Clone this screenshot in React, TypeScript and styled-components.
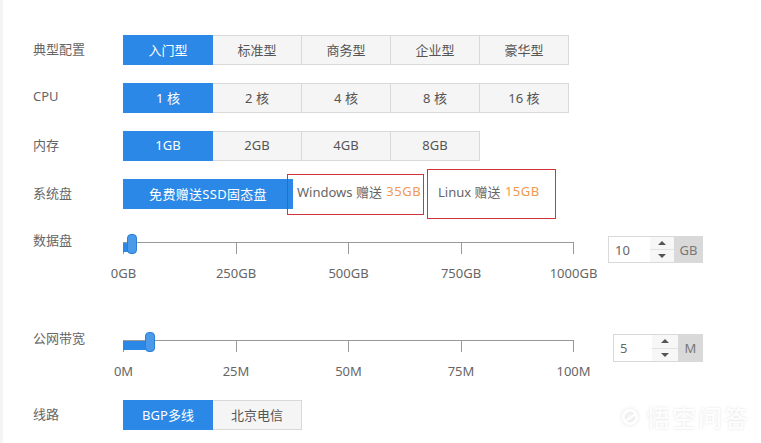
import React from "react";
import styled, { createGlobalStyle } from "styled-components";

const FONT = `"Noto Sans", "Noto Sans CJK SC", sans-serif`;

const GlobalStyle = createGlobalStyle`
  html, body {
    margin: 0;
    padding: 0;
    background: #fff;
    overflow: hidden;
  }
`;

interface SliderConfig {
  marks: string[];
  fill: number;
  thumb: number;
  value: string;
  unit: string;
  inputWidth: number;
  spinWidth: number;
  unitWidth: number;
  height: number;
}

const diskSlider: SliderConfig = {
  marks: ["0GB", "250GB", "500GB", "750GB", "1000GB"],
  fill: 6,
  thumb: 4,
  value: "10",
  unit: "GB",
  inputWidth: 42,
  spinWidth: 24,
  unitWidth: 29,
  height: 27,
};

const bandwidthSlider: SliderConfig = {
  marks: ["0M", "25M", "50M", "75M", "100M"],
  fill: 24,
  thumb: 22,
  value: "5",
  unit: "M",
  inputWidth: 39,
  spinWidth: 26,
  unitWidth: 25,
  height: 28,
};

function Segments({ items, wide }: { items: string[]; wide?: boolean }) {
  return (
    <Group>
      {items.map((item, index) => (
        <Segment key={item} active={index === 0} wide={wide}>
          {item}
        </Segment>
      ))}
    </Group>
  );
}

function SliderField({ config }: { config: SliderConfig }) {
  return (
    <SliderRow>
      <Slider>
        <Track>
          <Fill style={{ width: config.fill }} />
          <Thumb style={{ left: config.thumb }} />
          {config.marks.map((mark) => (
            <Tick key={mark} />
          ))}
        </Track>
        <Marks>
          {config.marks.map((mark) => (
            <Mark key={mark}>{mark}</Mark>
          ))}
        </Marks>
      </Slider>
      <Spinner>
        <SpinnerValue style={{ width: config.inputWidth, height: config.height }}>
          {config.value}
        </SpinnerValue>
        <SpinnerArrows style={{ width: config.spinWidth }}>
          <SpinUp>
            <ArrowUp />
          </SpinUp>
          <SpinDown>
            <ArrowDown />
          </SpinDown>
        </SpinnerArrows>
        <SpinnerUnit style={{ width: config.unitWidth }}>{config.unit}</SpinnerUnit>
      </Spinner>
    </SliderRow>
  );
}

export default function App() {
  return (
    <Page>
      <GlobalStyle />
      <Form>
        <Row>
          <Label>典型配置</Label>
          <Segments items={["入门型", "标准型", "商务型", "企业型", "豪华型"]} />
        </Row>
        <Row>
          <Label>CPU</Label>
          <Segments items={["1 核", "2 核", "4 核", "8 核", "16 核"]} />
        </Row>
        <Row>
          <Label>内存</Label>
          <Segments items={["1GB", "2GB", "4GB", "8GB"]} />
        </Row>
        <Row>
          <Label>系统盘</Label>
          <Segments wide items={["免费赠送SSD固态盘"]} />
          <DiskOption>
            Windows 赠送 <Orange>35GB</Orange>
          </DiskOption>
          <DiskOption large>
            Linux 赠送 <Orange>15GB</Orange>
          </DiskOption>
        </Row>
        <SliderSection>
          <SliderLabel>数据盘</SliderLabel>
          <SliderField config={diskSlider} />
        </SliderSection>
        <SliderSection second>
          <SliderLabel>公网带宽</SliderLabel>
          <SliderField config={bandwidthSlider} />
        </SliderSection>
        <Row last>
          <Label>线路</Label>
          <Segments items={["BGP多线", "北京电信"]} />
        </Row>
      </Form>
      <Watermark>
        <WatermarkIcon viewBox="0 0 24 24" fill="none">
          <circle cx="12" cy="12" r="8" stroke="#fff" strokeWidth="3" />
          <path d="M5 18 L19 8" stroke="#fff" strokeWidth="3" />
        </WatermarkIcon>
        悟空问答
      </Watermark>
    </Page>
  );
}

const Page = styled.div`
  position: relative;
  width: 761px;
  height: 443px;
  box-sizing: border-box;
  padding: 35px 0 0 30px;
  background: #fff;
  border-left: 3px solid #f4f4f4;
  overflow: hidden;
  font-family: ${FONT};
  font-size: 13px;
  color: #666;
`;

const Form = styled.div`
  display: flex;
  flex-direction: column;
  width: 670px;
`;

const Row = styled.div<{ last?: boolean }>`
  display: flex;
  align-items: center;
  height: 30px;
  margin-bottom: ${({ last }) => (last ? 0 : 18)}px;
`;

const Label = styled.div`
  width: 90px;
  flex-shrink: 0;
  margin-top: -4px;
  font-size: 13px;
  color: #666;
`;

const Group = styled.div`
  display: flex;
  position: relative;
`;

const Segment = styled.div<{ active?: boolean; wide?: boolean }>`
  box-sizing: border-box;
  width: ${({ wide }) => (wide ? 170 : 89)}px;
  height: 30px;
  padding-bottom: 2px;
  display: flex;
  align-items: center;
  justify-content: center;
  font-size: 13px;
  letter-spacing: ${({ wide }) => (wide ? 0.3 : 0)}px;
  background: ${({ active }) => (active ? "#2b88e6" : "#f5f5f5")};
  color: ${({ active }) => (active ? "#fff" : "#555")};
  border: 1px solid ${({ active }) => (active ? "#2b88e6" : "#d9d9d9")};
  border-left-width: ${({ active }) => (active ? 1 : 0)}px;

  &:first-child {
    width: ${({ wide }) => (wide ? 170 : 90)}px;
  }
`;

const DiskOption = styled.div<{ large?: boolean }>`
  box-sizing: border-box;
  position: relative;
  height: ${({ large }) => (large ? 50 : 41)}px;
  width: ${({ large }) => (large ? 129 : 137)}px;
  margin-left: ${({ large }) => (large ? 3 : -6)}px;
  padding: 0 0 6px ${({ large }) => (large ? 10 : 9)}px;
  display: flex;
  align-items: center;
  white-space: pre;
  border: 1px solid #d0343c;
  font-size: 13px;
  color: #666;
`;

const Orange = styled.span`
  color: #f0994f;
  margin-left: 1px;
  letter-spacing: 0.5px;
`;

const SliderSection = styled.div<{ second?: boolean }>`
  display: flex;
  align-items: flex-start;
  height: ${({ second }) => (second ? 69 : 98)}px;
  margin-top: ${({ second }) => (second ? 0 : 6)}px;
`;

const SliderLabel = styled(Label)`
  margin-top: -2px;
  line-height: 18px;
`;

const SliderRow = styled.div`
  display: flex;
  flex: 1;
  justify-content: space-between;
  align-items: flex-start;
`;

const Slider = styled.div`
  width: 451px;
  padding-top: 9px;
`;

const Track = styled.div`
  position: relative;
  display: flex;
  justify-content: space-between;
  height: 11px;
  border-top: 1px solid #999;
`;

const Tick = styled.span`
  width: 1px;
  height: 11px;
  background: #999;
`;

const Fill = styled.div`
  position: absolute;
  left: 0;
  top: 0;
  height: 9px;
  background: #2b88e6;
`;

const Thumb = styled.div`
  position: absolute;
  top: -9px;
  box-sizing: border-box;
  width: 10px;
  height: 20px;
  background: #4a9ae9;
  border: 1px solid #2b7fd6;
  border-radius: 4px;
`;

const Marks = styled.div`
  display: flex;
  justify-content: space-between;
  margin-top: 10px;
`;

const Mark = styled.span`
  width: 1px;
  display: flex;
  justify-content: center;
  white-space: nowrap;
  font-size: 13px;
  line-height: 18px;
  color: #666;
`;

const Spinner = styled.div`
  display: flex;
  margin-top: 3px;
`;

const SpinnerValue = styled.div`
  box-sizing: border-box;
  display: flex;
  align-items: center;
  padding-left: 6px;
  font-size: 13px;
  color: #666;
  background: #fff;
  border: 1px solid #d9d9d9;
  border-right: 0;
`;

const SpinnerArrows = styled.div`
  box-sizing: border-box;
  display: flex;
  flex-direction: column;
  background: #f7f7f7;
  border-top: 1px solid #d9d9d9;
  border-bottom: 1px solid #d9d9d9;
`;

const SpinUp = styled.div`
  flex: 1;
  display: flex;
  align-items: center;
  justify-content: center;
  border-bottom: 1px solid #e2e2e2;
`;

const SpinDown = styled.div`
  flex: 1;
  display: flex;
  align-items: center;
  justify-content: center;
`;

const ArrowUp = styled.span`
  width: 0;
  height: 0;
  border-left: 4px solid transparent;
  border-right: 4px solid transparent;
  border-bottom: 4px solid #555;
`;

const ArrowDown = styled.span`
  width: 0;
  height: 0;
  border-left: 4px solid transparent;
  border-right: 4px solid transparent;
  border-top: 4px solid #555;
`;

const SpinnerUnit = styled.div`
  display: flex;
  align-items: center;
  justify-content: center;
  background: #d9d9d9;
  font-size: 13px;
  color: #777;
`;

const Watermark = styled.div`
  position: absolute;
  right: 11px;
  top: 404px;
  display: flex;
  align-items: center;
  gap: 6px;
  font-family: "Noto Sans CJK SC", sans-serif;
  font-size: 24px;
  line-height: 26px;
  letter-spacing: 2px;
  color: #fff;
  text-shadow: 0 0 3px rgba(0, 0, 0, 0.13);
`;

const WatermarkIcon = styled.svg`
  width: 20px;
  height: 20px;
  filter: drop-shadow(0 0 2px rgba(0, 0, 0, 0.13));
`;
